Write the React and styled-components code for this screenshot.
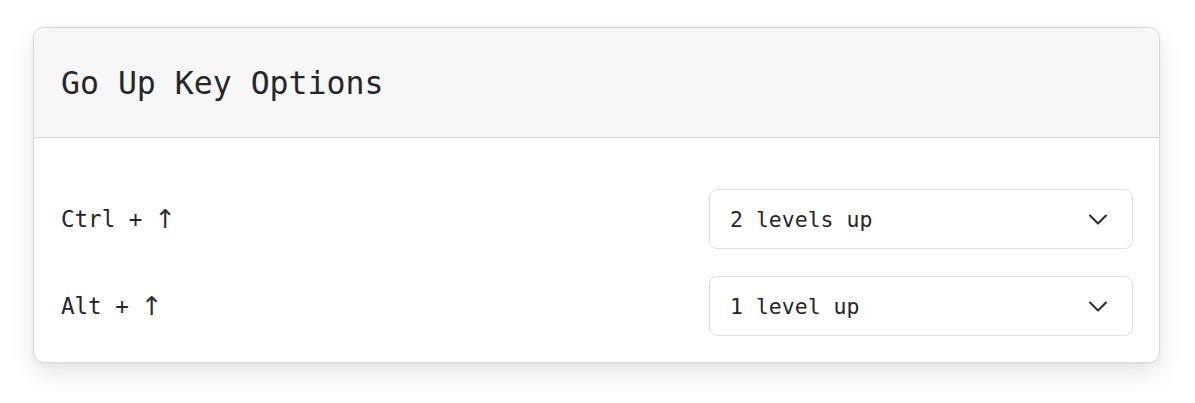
import React, { useState } from "react";
import styled, { createGlobalStyle } from "styled-components";

const GlobalStyle = createGlobalStyle`
  html, body {
    margin: 0;
    padding: 0;
    background: #ffffff;
  }
  body {
    font-family: "DejaVu Sans Mono", "Liberation Mono", monospace;
    color: #222326;
  }
`;

const Page = styled.main`
  padding: 27px 35px 40px 33px;
`;

const Card = styled.section`
  background: #ffffff;
  border: 1px solid #d9d9d9;
  border-radius: 11px;
  box-shadow: 0 10px 26px rgba(0, 0, 0, 0.1), 0 2px 6px rgba(0, 0, 0, 0.04);
  overflow: hidden;
`;

const Header = styled.header`
  height: 109px;
  display: flex;
  align-items: center;
  padding: 0 27px;
  background: #f7f7f7;
  border-bottom: 1px solid #d6d6d6;
  h2 {
    margin: 0;
    font-size: 31.5px;
    font-weight: 400;
    color: #25262a;
  }
`;

const Body = styled.div`
  display: flex;
  flex-direction: column;
  gap: 27px;
  padding: 51px 26px 26px 27px;
`;

const Row = styled.div`
  display: flex;
  align-items: center;
  justify-content: space-between;
`;

const Label = styled.span`
  display: flex;
  align-items: center;
  gap: 12px;
  font-size: 22.5px;
  color: #25262a;
`;

const Arrow = styled.span`
  font-family: "DejaVu Sans", sans-serif;
  font-size: 26px;
  line-height: 1;
  color: #2f3034;
`;

const Select = styled.button`
  width: 424px;
  height: 60px;
  display: flex;
  align-items: center;
  justify-content: space-between;
  padding: 0 22px 0 20px;
  background: #ffffff;
  border: 1px solid #dfdfdf;
  border-radius: 8px;
  font-family: inherit;
  font-size: 21.5px;
  color: #25262a;
  cursor: pointer;
  svg {
    width: 24px;
    height: 24px;
  }
`;

const Chevron = () => (
  <svg viewBox="0 0 24 24" fill="none" stroke="#2a2b2e" strokeWidth="2" strokeLinecap="round" strokeLinejoin="round">
    <path d="M4 8.5l8 8 8-8" />
  </svg>
);

const options = [
  { key: "Ctrl +", value: "2 levels up" },
  { key: "Alt +", value: "1 level up" },
];

export default function App() {
  const [rows] = useState(options);
  return (
    <>
      <GlobalStyle />
      <Page>
        <Card>
          <Header>
            <h2>Go Up Key Options</h2>
          </Header>
          <Body>
            {rows.map((r) => (
              <Row key={r.key}>
                <Label>
                  <span>{r.key}</span>
                  <Arrow>↑</Arrow>
                </Label>
                <Select>
                  <span>{r.value}</span>
                  <Chevron />
                </Select>
              </Row>
            ))}
          </Body>
        </Card>
      </Page>
    </>
  );
}
